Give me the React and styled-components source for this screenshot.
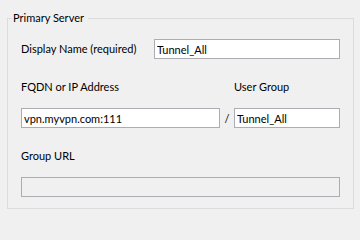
import React from 'react'
import styled, { createGlobalStyle } from 'styled-components';

const GlobalStyle = createGlobalStyle`
  html, body {
    margin: 0;
    padding: 0;
    background: #f0f0f0;
  }
  body {
    font-family: Lato, "Liberation Sans", sans-serif;
    font-size: 11px;
    color: #000;
  }
`;

const Page = styled.div`
  width: 360px;
  height: 217px;
  padding: 11px 0 0 7px;
  box-sizing: border-box;
`;

const GroupBox = styled.fieldset`
  width: 347px;
  height: 198px;
  box-sizing: border-box;
  margin: 0;
  padding: 0 13px 0 13px;
  border: 1px solid #dcdcdc;
  legend {
    margin-left: -9px;
    padding: 0 4px 0 1px;
    line-height: 14px;
    font-size: 11px;
  }
`;

const Row = styled.div`
  display: flex;
  align-items: center;
  margin-top: ${p => p.top}px;
`;

const Label = styled.label`
  display: block;
  width: ${p => p.width ? p.width + 'px' : 'auto'};
  line-height: 16px;
  white-space: nowrap;
`;

const Field = styled.input`
  box-sizing: border-box;
  width: ${p => p.width}px;
  height: 20px;
  margin: 0;
  padding: 0 0 0 2px;
  border: 1px solid #abadb3;
  background: ${p => p.disabled ? '#f0f0f0' : '#fff'};
  font-family: Lato, "Liberation Sans", sans-serif;
  font-size: 11px;
  color: #000;
  outline: none;
`;

const Grid = styled.div`
  display: grid;
  grid-template-columns: 199px 14px 106px;
  align-items: center;
  margin-top: ${p => p.top}px;
`;

const Slash = styled.span`
  text-align: center;
  color: #000;
`;

class App extends React.Component {
  render() {
    return (
      <Page>
        <GlobalStyle />
        <GroupBox>
          <legend>Primary Server</legend>
          <Row top={14}>
            <Label width={133}>Display Name (required)</Label>
            <Field width={186} defaultValue="Tunnel_All" />
          </Row>
          <Grid top={20}>
            <Label>FQDN or IP Address</Label>
            <span />
            <Label>User Group</Label>
          </Grid>
          <Grid top={13}>
            <Field width={199} defaultValue="vpn.myvpn.com:111" />
            <Slash>/</Slash>
            <Field width={106} defaultValue="Tunnel_All" />
          </Grid>
          <Row top={20}>
            <Label>Group URL</Label>
          </Row>
          <Row top={13}>
            <Field width={319} disabled />
          </Row>
        </GroupBox>
      </Page>
    )
  }
}

export default App;
